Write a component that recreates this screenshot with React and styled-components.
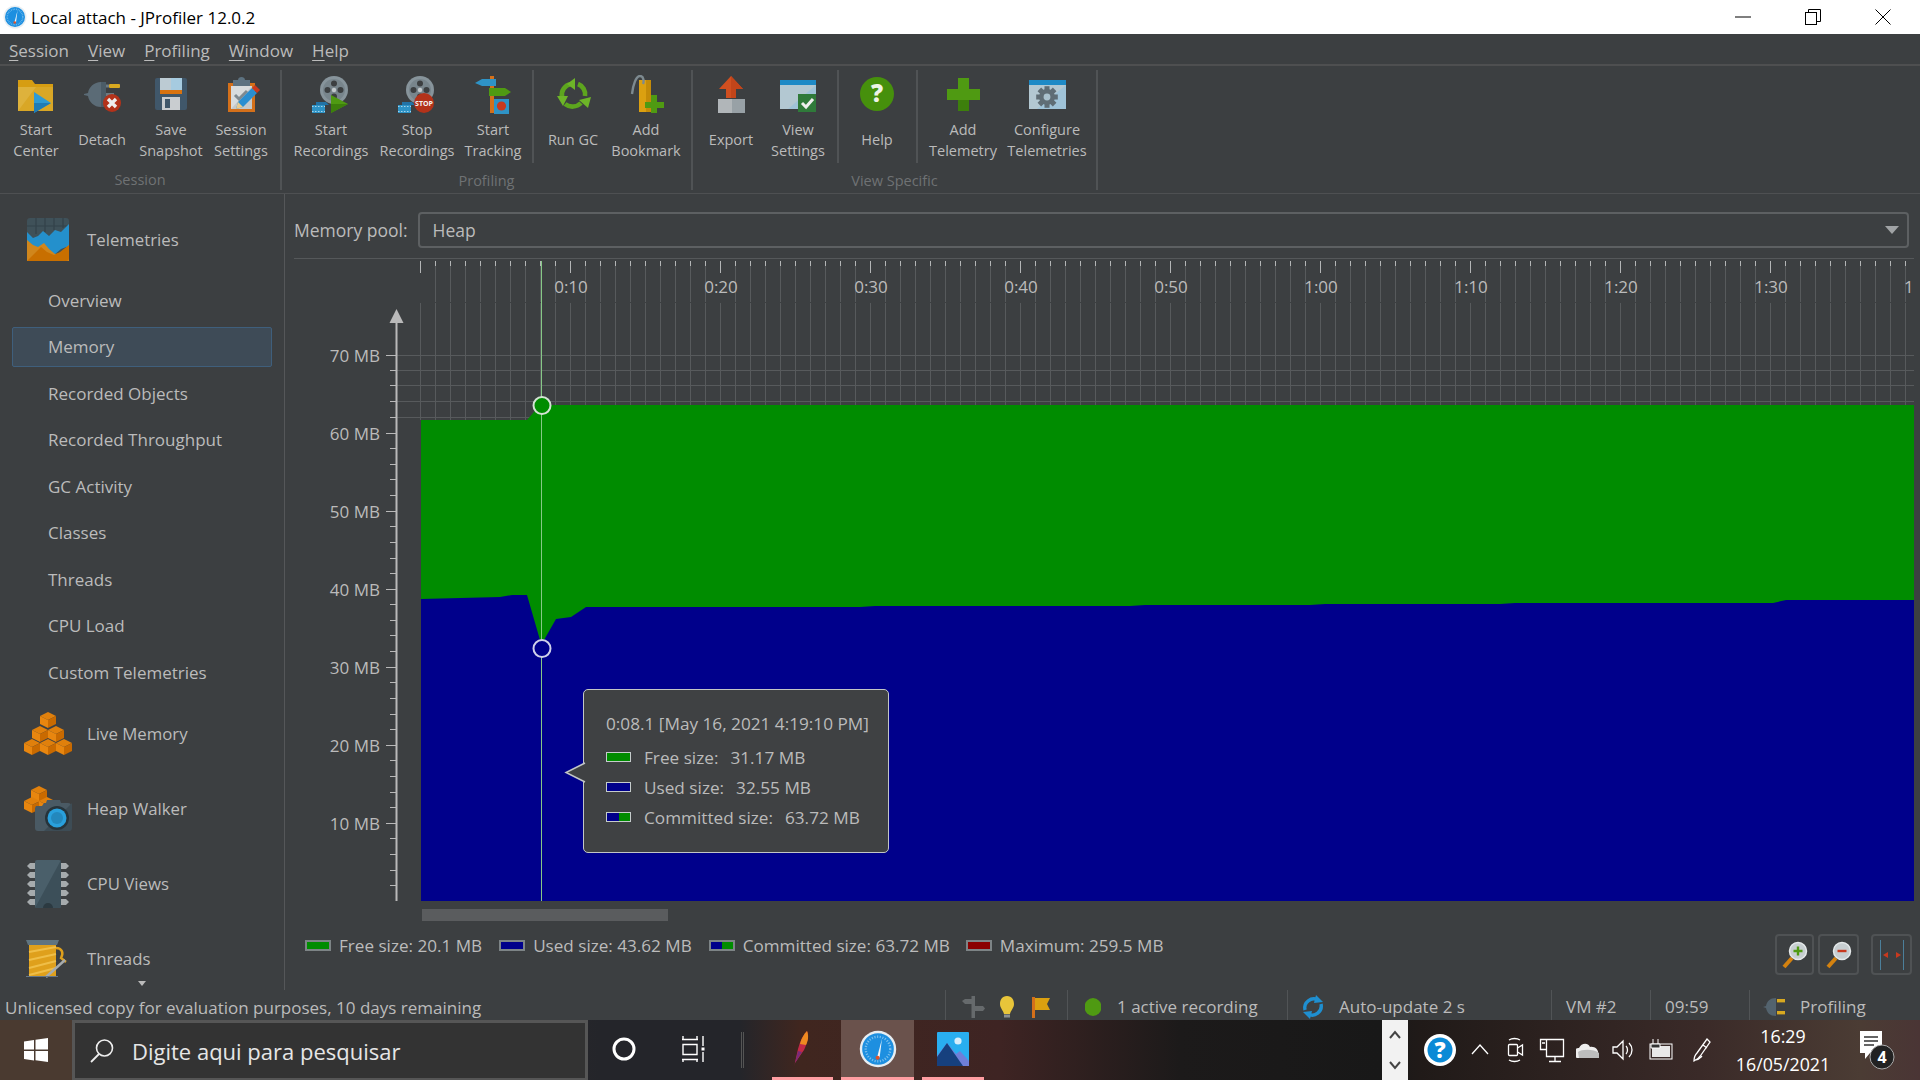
import React from "react";
import styled, { createGlobalStyle } from "styled-components";

const GlobalStyle = createGlobalStyle`
  html, body {
    margin: 0;
    padding: 0;
    background: #3c3f41;
  }
  body {
    font-family: "Open Sans", "Noto Sans", sans-serif;
    overflow: hidden;
  }
`;

const Page = styled.div`
  width: 1920px;
  height: 1080px;
  display: flex;
  flex-direction: column;
  background: #3c3f41;
  color: #bbbbbb;
  overflow: hidden;
`;

/* title bar */
const TitleBar = styled.div`
  height: 34px;
  flex: none;
  display: flex;
  align-items: center;
  background: #fff;
  color: #000;
  padding: 0 2px 0 3px;
  font-size: 17px;
`;

const TitleText = styled.span`
  margin-left: 4px;
  flex: 1;
`;

const WinButton = styled.div`
  width: 70px;
  height: 34px;
  display: flex;
  align-items: center;
  justify-content: center;
`;

/* menu */
const MenuBar = styled.div`
  height: 30px;
  box-sizing: content-box;
  flex: none;
  display: flex;
  align-items: center;
  border-bottom: 2px solid #4e4f50;
  padding-left: 9px;
  gap: 19px;
  font-size: 17px;
`;

const MenuEntry = styled.span`
  padding-top: 2px;
`;

const MenuKey = styled.span`
  text-decoration: underline;
  text-underline-offset: 3px;
`;

/* ribbon */
const Ribbon = styled.div`
  height: 127px;
  flex: none;
  display: flex;
  align-items: flex-start;
  border-bottom: 1px solid #4e5052;
`;

const Group = styled.div`
  width: ${(p) => p.$width}px;
  height: 120px;
  margin-top: 4px;
  box-sizing: border-box;
  border-right: 2px solid #505355;
  padding-left: ${(p) => p.$pad}px;
  display: flex;
  flex-direction: column;
`;

const GroupRow = styled.div`
  display: flex;
  height: 93px;
`;

const GroupTitle = styled.div`
  font-size: 14.5px;
  color: #6f7274;
  text-align: center;
  margin-left: ${(p) => -p.$pad}px;
  line-height: 20px;
  margin-top: 8px;
`;

const RowSep = styled.div`
  width: 2px;
  height: 93px;
  background: #505355;
  margin: 0 ${(p) => p.$right}px 0 ${(p) => p.$left}px;
`;

const Tool = styled.div`
  width: ${(p) => p.$width}px;
  flex: none;
  display: flex;
  flex-direction: column;
  align-items: center;
  padding-top: 5px;
`;

const ToolLabel = styled.div`
  height: 42px;
  margin-top: 4px;
  box-sizing: border-box;
  padding-bottom: ${(p) => (p.$single ? 2 : 0)}px;
  display: flex;
  align-items: center;
  text-align: center;
  font-size: 14.5px;
  line-height: 21px;
  white-space: nowrap;
`;

/* body */
const Body = styled.div`
  flex: 1;
  min-height: 0;
  display: flex;
`;

const Sidebar = styled.div`
  width: 285px;
  flex: none;
  box-sizing: border-box;
  border-right: 1px solid #555759;
  padding-top: 24px;
  position: relative;
  overflow: hidden;
`;

const NavSection = styled.div`
  height: 43px;
  display: flex;
  align-items: center;
  font-size: 16.8px;
  margin-bottom: ${(p) => p.$after}px;
`;

const NavIcon = styled.div`
  width: 87px;
  flex: none;
  display: flex;
  justify-content: center;
  padding-left: 9px;
  box-sizing: border-box;
`;

const NavItem = styled.div`
  width: 260px;
  height: 40px;
  margin: 0 0 6.5px 12px;
  box-sizing: border-box;
  padding-left: 35px;
  display: flex;
  align-items: center;
  font-size: 17px;
  border-radius: 2px;
  border: 1px solid ${(p) => (p.$active ? "#3f5f7c" : "transparent")};
  background: ${(p) => (p.$active ? "#3e4b57" : "transparent")};
`;

const NavItems = styled.div`
  margin-bottom: 20px;
`;

const ScrollHint = styled.div`
  position: absolute;
  left: 138px;
  bottom: 4px;
  width: 0;
  height: 0;
  border-left: 4px solid transparent;
  border-right: 4px solid transparent;
  border-top: 5px solid #bbbbbb;
`;

const Main = styled.div`
  flex: 1;
  min-width: 0;
  display: flex;
  flex-direction: column;
`;

const PoolRow = styled.div`
  height: 65px;
  flex: none;
  box-sizing: border-box;
  margin: 0 6px 0 9px;
  border-bottom: 1px solid #55585a;
  display: flex;
  align-items: center;
  padding: 7px 5px 0 0;
  font-size: 17.5px;
`;

const PoolCombo = styled.div`
  flex: 1;
  height: 36px;
  box-sizing: border-box;
  margin-left: 10px;
  padding: 0 8px 0 13px;
  border: 2px solid #5d6062;
  border-radius: 4px;
  display: flex;
  align-items: center;
  justify-content: space-between;
`;

const ComboArrow = styled.div`
  width: 0;
  height: 0;
  border-left: 7px solid transparent;
  border-right: 7px solid transparent;
  border-top: 8px solid #a0a3a5;
`;

const ChartArea = styled.div`
  position: relative;
  height: 665px;
  flex: none;
  svg {
    display: block;
  }
`;

const Tooltip = styled.div`
  position: absolute;
  left: 298px;
  top: 430px;
  width: 306px;
  height: 164px;
  box-sizing: border-box;
  padding: 21px 0 0 22px;
  background: #3f4143;
  border: 1.5px solid #c2c6c6;
  border-radius: 5px;
  font-size: 17.2px;
`;

const TipPointer = styled.svg`
  position: absolute;
  left: -20px;
  top: 71px;
`;

const TipTitle = styled.div`
  height: 26px;
  line-height: 26px;
  margin-bottom: 5px;
  white-space: nowrap;
`;

const TipRow = styled.div`
  height: 30px;
  display: flex;
  align-items: center;
  white-space: nowrap;
`;

const TipValue = styled.span`
  margin-left: 12px;
`;

const Swatch = styled.span`
  width: ${(p) => (p.$legend ? 26 : 25)}px;
  height: ${(p) => (p.$legend ? 11 : 10)}px;
  flex: none;
  box-sizing: border-box;
  margin-right: ${(p) => (p.$legend ? 8 : 13)}px;
  border: ${(p) => (p.$legend ? "2px solid #7d8486" : "1px solid #c5cccc")};
  background: ${(p) => p.$fill};
`;

const LegendRow = styled.div`
  flex: 1;
  position: relative;
  display: flex;
  align-items: flex-start;
  padding: 7px 0 0 20px;
  font-size: 17.1px;
`;

const LegendItem = styled.div`
  display: flex;
  align-items: center;
  height: 14px;
  margin-top: 7px;
  margin-right: ${(p) => p.$after}px;
  white-space: nowrap;
`;

const ZoomButtons = styled.div`
  margin-left: auto;
  margin-top: 3px;
  display: flex;
  padding-right: 8px;
`;

const ZoomButton = styled.div`
  width: ${(p) => p.$width}px;
  height: 41px;
  box-sizing: border-box;
  margin-left: ${(p) => p.$gap}px;
  border: 2px solid #4f5254;
  border-radius: 4px;
  display: flex;
  align-items: center;
  justify-content: center;
`;

/* status bar */
const StatusBar = styled.div`
  height: 30px;
  flex: none;
  display: flex;
  align-items: center;
  font-size: 17px;
  padding-left: 5px;
`;

const StatusText = styled.div`
  margin-right: auto;
  padding-top: 4px;
  white-space: nowrap;
`;

const StatusCell = styled.div`
  width: ${(p) => p.$width}px;
  height: 30px;
  flex: none;
  box-sizing: border-box;
  border-left: 1px solid #515456;
  padding: 3px 0 0 ${(p) => p.$pad}px;
  display: flex;
  align-items: center;
  gap: ${(p) => p.$gap || 0}px;
  white-space: nowrap;
`;

/* windows taskbar */
const Taskbar = styled.div`
  height: 60px;
  flex: none;
  display: flex;
  align-items: stretch;
  color: #fff;
  background: linear-gradient(
    90deg,
    #4a3a30 0,
    #4a3a30 72px,
    #24252a 600px,
    #24252a 740px,
    #40261f 800px,
    #3e2423 1000px,
    #1c1a1a 1180px,
    #181818 1380px,
    #201a18 1420px,
    #3a2a28 1700px,
    #4b3c34 1860px,
    #4a3535 1920px
  );
`;

const StartButton = styled.div`
  width: 72px;
  flex: none;
  display: flex;
  align-items: center;
  justify-content: center;
`;

const SearchBox = styled.div`
  width: 516px;
  flex: none;
  box-sizing: border-box;
  background: #333333;
  border: 3px solid #565656;
  border-bottom-width: 2px;
  display: flex;
  align-items: center;
  padding-left: 14px;
  gap: 17px;
  font-size: 22px;
  color: #e6e6e6;
`;

const TaskCell = styled.div`
  width: ${(p) => p.$width}px;
  flex: none;
  margin-left: ${(p) => p.$left || 0}px;
  box-sizing: border-box;
  display: flex;
  align-items: center;
  justify-content: center;
  background: ${(p) => (p.$active ? "#6a524c" : "transparent")};
  border-bottom: 3px solid ${(p) => (p.$open ? "#ff9ea2" : "transparent")};
`;

const TaskDivider = styled.div`
  width: 3px;
  height: 36px;
  margin: 12px 28px 0 11px;
  border-left: 1px solid #555;
  border-right: 1px solid #555;
  box-sizing: border-box;
`;

const TrayStrip = styled.div`
  width: 26px;
  margin-left: auto;
  flex: none;
  background: #f2f2f2;
  display: flex;
  flex-direction: column;
  align-items: center;
  justify-content: space-between;
  padding: 10px 0;
  box-sizing: border-box;
  margin-right: 12px;
`;

const TrayCell = styled.div`
  width: ${(p) => p.$width}px;
  flex: none;
  display: flex;
  align-items: center;
  justify-content: center;
`;

const Clock = styled.div`
  width: 114px;
  flex: none;
  display: flex;
  flex-direction: column;
  align-items: center;
  justify-content: space-between;
  padding: 5px 0 5px;
  box-sizing: border-box;
  font-size: 17.8px;
  line-height: 22px;
`;

const TrayEnd = styled.div`
  width: 80px;
  flex: none;
  display: flex;
  padding-left: 18px;
  box-sizing: border-box;
  align-items: center;
`;

const GREEN = "#008c00";
const BLUE = "#00008b";

/* ---------- toolbar icons ---------- */
const Ic = ({ children, size = 40, w, h }) => (
  <svg width={w || size} height={h || size} viewBox={`0 0 ${w || size} ${h || size}`}>
    {children}
  </svg>
);

const StartCenterIcon = () => (
  <Ic>
    <path d="M2 5h14l3 4h18v27H2z" fill="#d69d12" />
    <path d="M2 12h35v24H2z" fill="#deb23c" />
    <path d="M2 36l18-24h17v24z" fill="#d9a726" />
    <path d="M18 17l17 11-17 10z" fill="#2e9bd4" />
    <path d="M18 28h17l-17 10z" fill="#1f7cb6" />
  </Ic>
);

const DetachIcon = () => (
  <Ic>
    <path d="M2 19l4-1c1-6 6-11 13-11h5v25h-5c-7 0-12-5-13-11l-4-1z" fill="#5b6b76" />
    <path d="M24 7v25h-5V7z" fill="#4b5c67" />
    <rect x="27" y="9" width="11" height="4" rx="1" fill="#d8a920" />
    <rect x="24" y="9.5" width="3" height="3" fill="#6d7a82" />
    <rect x="24" y="18" width="8" height="3" fill="#6d7a82" />
    <circle cx="30" cy="28" r="9" fill="#b3321a" />
    <path d="M26 24l8 8M34 24l-8 8" stroke="#eee" strokeWidth="3.4" />
  </Ic>
);

const SaveIcon = () => (
  <Ic>
    <rect x="4" y="3" width="32" height="32" rx="2" fill="#40576a" />
    <rect x="9" y="3" width="11" height="12" fill="#bccbd3" />
    <rect x="20" y="3" width="11" height="12" fill="#a6cbe0" />
    <rect x="9" y="15" width="22" height="4" fill="#d9730f" />
    <rect x="11" y="22" width="18" height="13" fill="#c9cdd0" />
    <rect x="14" y="24" width="5" height="9" fill="#40576a" />
  </Ic>
);

const SettingsIcon = () => (
  <Ic>
    <rect x="7" y="8" width="27" height="29" fill="#d4701a" />
    <rect x="10" y="11" width="21" height="23" fill="#d8dcdd" />
    <path d="M10 34l21-23v23z" fill="#c4c8ca" />
    <path d="M12 5h17v6H12z" fill="#5d7280" />
    <path d="M17 5c0-4 7-4 7 0z" fill="#5d7280" />
    <path d="M14 20l4 4 8-8" fill="none" stroke="#7f8a90" strokeWidth="3" />
    <path d="M15 34l2-7 14-14 5 5-14 14z" fill="#2a8ed0" />
    <path d="M31 13l3-3 5 5-3 3z" fill="#c8391e" />
    <path d="M15 34l2-7 5 5z" fill="#e8cb90" />
  </Ic>
);

const Reel = () => (
  <g>
    <circle cx="23" cy="15" r="14" fill="#87949b" />
    <circle cx="23" cy="15" r="11" fill="#78858c" />
    <circle cx="23" cy="8.5" r="3" fill="#3c3f41" />
    <circle cx="23" cy="21.5" r="3" fill="#3c3f41" />
    <circle cx="16.5" cy="15" r="3" fill="#3c3f41" />
    <circle cx="29.5" cy="15" r="3" fill="#3c3f41" />
    <circle cx="23" cy="15" r="2.2" fill="#c2c8cb" />
    <path d="M5 27h10l3 3H5z" fill="#2273a6" />
    <rect x="1" y="30" width="13" height="8" fill="#2e93c6" />
    <path d="M1 31.5h13M1 36.5h13" stroke="#a5d4ec" strokeDasharray="1.5 1.5" />
  </g>
);

const StartRecIcon = () => (
  <Ic>
    <Reel />
    <path d="M20 20l17 9-17 9z" fill="#4f9a12" />
    <path d="M20 29h17l-17 9z" fill="#3d7f0c" />
  </Ic>
);

const StopRecIcon = () => (
  <Ic>
    <Reel />
    <circle cx="27" cy="28" r="10" fill="#b3321a" />
    <text x="27" y="30.5" textAnchor="middle" fontSize="7" fontWeight="700" fill="#f3f3f3">STOP</text>
  </Ic>
);

const TrackingIcon = () => (
  <Ic>
    <rect x="17" y="1" width="4" height="37" fill="#d4701a" />
    <path d="M2 8l7-4h14v7H9z" fill="#2e93c6" />
    <path d="M16 13h16l6 4-6 4H16z" fill="#4f9a12" />
    <rect x="21" y="24" width="15" height="15" fill="#2e93c6" />
    <circle cx="28.5" cy="31" r="4.6" fill="#c8391e" />
  </Ic>
);

const RunGcIcon = () => (
  <Ic>
    <g fill="none" stroke="#5da51e" strokeWidth="4.6">
      <path d="M9 22a11 11 0 0 1 9-13" />
      <path d="M25 9a11 11 0 0 1 7 12" />
      <path d="M28 28a12 12 0 0 1-16 1" />
    </g>
    <path d="M14 9l8-6v12z" fill="#6db528" />
    <path d="M26 25l12-3-3 11z" fill="#6db528" />
    <path d="M4 21h11l-5 10z" fill="#6db528" />
  </Ic>
);

const BookmarkIcon = () => (
  <Ic>
    <path d="M13 5h12v32H13z" fill="#dba010" />
    <path d="M20 5h5v32h-5z" fill="#c48b08" />
    <path d="M6 19C7 10 10 1 14 1c4 0 4 6 3 8" fill="none" stroke="#7d8a90" strokeWidth="2.4" />
    <path d="M25 20h6v7h7v6h-7v5h-6v-5h-6v-6h6z" fill="#4f9a12" />
  </Ic>
);

const ExportIcon = () => (
  <Ic>
    <path d="M20 1l12 13h-7v9H15v-9H8z" fill="#d04f20" />
    <path d="M20 1l12 13h-7v9h-5z" fill="#c2451a" />
    <rect x="7" y="24" width="14" height="14" fill="#b1b6b9" />
    <rect x="21" y="24" width="13" height="14" fill="#98a1a6" />
  </Ic>
);

const ViewSettingsIcon = () => (
  <Ic>
    <rect x="2" y="5" width="36" height="29" fill="#b3c8d2" />
    <path d="M38 10v24H10z" fill="#9fc3d8" />
    <rect x="2" y="5" width="36" height="5" fill="#1e8ac6" />
    <rect x="20" y="19" width="18" height="18" fill="#2f7a3a" />
    <path d="M24 28l4 4 7-8" fill="none" stroke="#eee" strokeWidth="3" />
  </Ic>
);

const HelpIcon = () => (
  <Ic>
    <ellipse cx="20" cy="19" rx="17" ry="17" fill="#46900c" />
    <text x="20" y="27" textAnchor="middle" fontSize="24" fontWeight="800" fill="#eef3e6">?</text>
  </Ic>
);

const AddIcon = () => (
  <Ic>
    <path d="M15 3h11v11h11v11H26v11H15V25H4V14h11z" fill="#4f9a12" />
    <path d="M4 25h11v11h11V25z" fill="#3d7f0c" />
  </Ic>
);

const GearShape = ({ cx, cy, r, fill, hole }) => {
  const teeth = [0, 45, 90, 135];
  return (
    <g>
      {teeth.map((a) => (
        <rect key={a} x={cx - r * 0.28} y={cy - r * 1.2} width={r * 0.56} height={r * 2.4} fill={fill} transform={`rotate(${a} ${cx} ${cy})`} />
      ))}
      <circle cx={cx} cy={cy} r={r * 0.88} fill={fill} />
      <circle cx={cx} cy={cy} r={r * 0.38} fill={hole} />
    </g>
  );
};

const ConfigureIcon = () => (
  <Ic>
    <rect x="2" y="5" width="37" height="29" fill="#b3c8d2" />
    <path d="M39 10v24H10z" fill="#9fc3d8" />
    <rect x="2" y="5" width="37" height="5" fill="#1e8ac6" />
    <GearShape cx={20} cy={22} r={9} fill="#5f6d75" hole="#a9c1cd" />
  </Ic>
);

/* ---------- sidebar icons ---------- */
const TelemetriesIcon = () => (
  <Ic w={42} h={43}>
    <rect width="42" height="43" rx="3" fill="#3f5159" />
    <path d="M9 0v16M18 0v14M27 0v12M36 0v10M0 8h42" stroke="#33424a" strokeWidth="1.2" />
    <path d="M0 14l6 6 5-2 5-5 6 5 6-6 6 2 8-8v22l-8 3-7 6-5-2-6 5-5-5-6 3-5-5z" fill="#2490cc" />
    <path d="M0 22l6 5 5 2 6-4 5 6 6 5 6-1 8-8v16a3 3 0 0 1-3 3H3a3 3 0 0 1-3-3z" fill="#d0861c" />
    <path d="M0 43l14-14 6 5 7 3 6-3 9-7v13a3 3 0 0 1-3 3z" fill="#c86f00" />
  </Ic>
);

const Cube = ({ x, y }) => (
  <g>
    <path d={`M${x} ${y}l8 4-8 4-8-4z`} fill="#e0800c" />
    <path d={`M${x - 8} ${y + 4}l8 4v8l-8-4z`} fill="#e8860f" />
    <path d={`M${x + 8} ${y + 4}l-8 4v8l8-4z`} fill="#c96a00" />
  </g>
);

const LiveMemoryIcon = () => (
  <Ic w={48} h={44}>
    <Cube x={24} y={0} />
    <Cube x={16} y={14} />
    <Cube x={32} y={14} />
    <Cube x={8} y={27} />
    <Cube x={24} y={27} />
    <Cube x={40} y={27} />
  </Ic>
);

const HeapWalkerIcon = () => (
  <Ic w={48} h={46}>
    <Cube x={15} y={0} />
    <Cube x={8} y={11} />
    <Cube x={23} y={11} />
    <path d="M12 20h6l2-3h2l1-3h13l1 3h7a3 3 0 0 1 3 3v22a3 3 0 0 1-3 3H14a3 3 0 0 1-3-3V22z" fill="#4a5a64" />
    <path d="M48 20v22a3 3 0 0 1-3 3H20l28-28z" fill="#3d4c55" />
    <circle cx="33" cy="32" r="12" fill="#26343b" />
    <circle cx="33" cy="32" r="9.5" fill="#29a0dc" />
    <circle cx="33" cy="32" r="6" fill="#2388bd" />
  </Ic>
);

const CpuIcon = () => (
  <Ic w={42} h={48}>
    {[3, 12, 21, 30, 39].map((y) => (
      <g key={y}>
        <path d={`M8 ${y}H3l-3 3 3 3h5z`} fill="#a6abad" />
        <path d={`M34 ${y}h5l3 3-3 3h-5z`} fill="#a6abad" />
      </g>
    ))}
    <rect x="8" y="0" width="26" height="48" rx="2" fill="#4a5f6a" />
    <path d="M34 0v46a2 2 0 0 1-2 2H8z" fill="#3c4f59" />
    <path d="M16 48a5 5 0 0 1 10 0z" fill="#2c3a41" />
  </Ic>
);

const ThreadsIcon = () => (
  <Ic w={44} h={38}>
    <path d="M0 0h33l-2 5H2z" fill="#5f7480" />
    <rect x="3" y="5" width="27" height="31" fill="#dfa01c" />
    <path d="M3 12l27-5M3 20l27-6M3 28l27-7M3 35l27-7" stroke="#efbe48" strokeWidth="2" />
    <path d="M30 8c6 0 8 5 5 10l5 4" fill="none" stroke="#dfa01c" strokeWidth="2.4" />
    <path d="M20 37l19-17" stroke="#a6abad" strokeWidth="2.4" />
    <rect y="36" width="32" height="1" fill="#667788" />
  </Ic>
);

/* ---------- status and taskbar icons ---------- */
const SignIcon = () => (
  <Ic size={24}>
    <rect x="10.5" y="1" width="3.5" height="22" fill="#666a6c" />
    <path d="M1 6l3-2h10v5H4z" fill="#666a6c" />
    <path d="M12 11h10l2 2.5-2 2.5H12z" fill="#666a6c" />
  </Ic>
);

const BulbIcon = () => (
  <Ic size={24}>
    <path d="M12 1c5 0 7 4 7 8 0 4-3 6-4 10H9c-1-4-4-6-4-10 0-4 2-8 7-8z" fill="#e8c53a" />
    <rect x="9" y="19.5" width="6" height="3" fill="#8a8f90" />
  </Ic>
);

const FlagIcon = () => (
  <Ic size={24}>
    <rect x="3" y="2" width="3" height="21" fill="#d4701a" />
    <path d="M6 3h15l-3 6 3 6H6z" fill="#dba010" />
  </Ic>
);

const RefreshIcon = () => (
  <Ic size={24}>
    <g fill="none" stroke="#1f8fd0" strokeWidth="3.4">
      <path d="M4 15a9 9 0 0 1 13-10" />
      <path d="M20 9a9 9 0 0 1-13 10" />
    </g>
    <path d="M15 0l7 7-9 1z" fill="#1f8fd0" />
    <path d="M9 24l-7-7 9-1z" fill="#1f8fd0" />
  </Ic>
);

const PlugSmall = () => (
  <Ic size={26}>
    <path d="M1 13l3-1c1-5 4-8 10-8v18c-6 0-9-3-10-8z" fill="#53636e" />
    <rect x="15" y="5" width="8" height="3.4" fill="#d8a920" />
    <rect x="15" y="17" width="8" height="3.4" fill="#d8a920" />
  </Ic>
);

const JProfilerLogo = ({ size }) => (
  <svg width={size} height={size} viewBox="0 0 48 48">
    <circle cx="24" cy="24" r="23" fill="#e8eef2" />
    <circle cx="24" cy="24" r="20" fill="#1d8fe0" />
    <circle cx="24" cy="24" r="15.5" fill="none" stroke="#7cc0ee" strokeWidth="3" strokeDasharray="1.4 2" />
    <path d="M29 11l-3 24-3-1z" fill="#f2f6f9" />
    <circle cx="23.5" cy="35" r="2.6" fill="#e0522a" />
  </svg>
);

const WindowsLogo = () => (
  <Ic size={24}>
    <path d="M0 3.4l10-1.4v9.5H0zM11.5 1.8L24 0v11.5H11.5zM0 13h10v9.5L0 21zM11.5 13H24v11l-12.5-1.8z" fill="#fff" />
  </Ic>
);

const SearchGlyph = () => (
  <Ic size={26}>
    <circle cx="15.5" cy="10" r="8" fill="none" stroke="#eee" strokeWidth="1.6" />
    <path d="M10 16L2 24" stroke="#eee" strokeWidth="1.8" />
  </Ic>
);

const TaskViewIcon = () => (
  <Ic size={26}>
    <g fill="none" stroke="#fff" strokeWidth="1.4">
      <path d="M0 3.5h16M1 8.5h14v10H1zM0 23.5h16M1 3.5V0M15 3.5V0M1 23.5V26M15 23.5V26" />
      <path d="M21 0v10M21 16v10" />
    </g>
    <rect x="19.5" y="11.5" width="3" height="3" fill="#fff" />
  </Ic>
);

const FeatherIcon = () => (
  <Ic size={40}>
    <g transform="translate(-5 0)">
      <path d="M29 2c2 5 0 13-3 19l-9 13-1 4 4-18C22 12 25 6 29 2z" fill="#c22a48" />
      <path d="M29 2c2 5 1 10-1 14l-6-1c1-5 4-10 7-13z" fill="#ee8a20" />
      <path d="M17 34l3-12 4 1z" fill="#7a2a7a" />
    </g>
  </Ic>
);

const PhotosIcon = () => (
  <Ic size={34}>
    <rect x="1" y="0" width="32" height="34" rx="1" fill="#29aef0" />
    <circle cx="22" cy="9" r="3.6" fill="#d8eefb" />
    <path d="M1 34V24l10-13 9 11 4-3 9 10v5z" fill="#6f7fd8" />
    <path d="M1 34V25l10-14 16 23z" fill="#16407e" />
  </Ic>
);

const TrayHelp = () => (
  <Ic size={34}>
    <circle cx="17" cy="17" r="16" fill="#fff" />
    <circle cx="17" cy="17" r="12.5" fill="#0a8ad6" />
    <text x="17" y="25" textAnchor="middle" fontSize="22" fontWeight="800" fill="#fff">?</text>
  </Ic>
);

const TrayStroke = ({ children, w = 24, h = 24 }) => (
  <svg width={w} height={h} viewBox={`0 0 ${w} ${h}`} fill="none" stroke="#fff" strokeWidth="1.3">
    {children}
  </svg>
);

const ZoomGlass = ({ sign }) => (
  <Ic size={30}>
    <path d="M12 18L4 27" stroke="#d4820f" strokeWidth="4" />
    <circle cx="18" cy="11" r="8.5" fill="#c7ced1" stroke="#e5e9ea" strokeWidth="1.5" />
    {sign === "+" ? (
      <path d="M18 6.5v9M13.5 11h9" stroke="#4f9a12" strokeWidth="2.4" />
    ) : (
      <path d="M13.5 11h9" stroke="#c8391e" strokeWidth="2.4" />
    )}
  </Ic>
);

/* ---------- chart ---------- */
const xTicks = Array.from({ length: 100 }, (_, i) => 420 + i * 15);
const yMajors = [355, 433, 511, 589, 667, 745, 823];
const yLabels = ["70 MB", "60 MB", "50 MB", "40 MB", "30 MB", "20 MB", "10 MB"];
const yMinors = [355, 370, 385, 401, 417, 433, 448, 464, 479, 495, 511, 526, 542, 558, 573, 589, 604, 620, 635, 651, 667, 682, 698, 714, 729, 745, 760, 776, 792, 807, 823, 838, 854, 870, 885];
const timeLabels = ["0:10", "0:20", "0:30", "0:40", "0:50", "1:00", "1:10", "1:20", "1:30"];

const greenPts = "421,901 421,420 527,420 540,405 1914,405 1914,901";
const bluePts =
  "421,901 421,599 500,597 512,595 527,595 540,640 544,640 556,619 571,617 586,607 860,607 875,606 1130,606 1145,605 1310,605 1325,604 1500,604 1515,603 1773,603 1786,600 1914,600 1914,901";

const MemoryChart = () => (
  <svg width="1635" height="665" viewBox="285 259 1635 665" fontSize="17" fill="#bbbbbb">
    {xTicks.map((x) => {
      const major = (x - 420) % 150 === 0;
      return (
        <g key={x}>
          {!major && <line x1={x + 0.5} x2={x + 0.5} y1="266" y2="302" stroke="#575a5c" />}
          <line x1={x + 0.5} x2={x + 0.5} y1="261" y2={major ? 273 : 266} stroke="#b4b6b7" />
          <line x1={x + 0.5} x2={x + 0.5} y1="303" y2="420" stroke="#575a5c" />
        </g>
      );
    })}
    {yMinors.slice(0, 5).map((y) => (
      <line key={y} x1="396" x2="1914" y1={y + 0.5} y2={y + 0.5} stroke="#575a5c" />
    ))}
    {timeLabels.map((t, i) => (
      <text key={t} x={571 + i * 150} y="293" textAnchor="middle">{t}</text>
    ))}
    <text x="1904" y="293">1</text>

    <polygon points={greenPts} fill={GREEN} />
    <polygon points={bluePts} fill={BLUE} />

    <line x1="396.5" x2="396.5" y1="322" y2="901" stroke="#b9b9b9" strokeWidth="2" />
    <path d="M396.5 309l7 14h-14z" fill="#b9b9b9" />
    {yMinors.map((y) => (
      <line key={y} x1={yMajors.includes(y) ? 386 : 390} x2="396" y1={y + 0.5} y2={y + 0.5} stroke="#b9b9b9" />
    ))}
    {yMajors.map((y, i) => (
      <text key={y} x="380" y={y + 7} textAnchor="end">{yLabels[i]}</text>
    ))}

    <line x1="541.5" x2="541.5" y1="261" y2="901" stroke="#86c886" />
    <circle cx="542" cy="405.5" r="8.5" fill={GREEN} stroke="#d3e3d3" strokeWidth="2" />
    <circle cx="542" cy="648.5" r="8.5" fill={BLUE} stroke="#cfd0ea" strokeWidth="2" />

    <rect x="422" y="909" width="246" height="12" fill="#5a5c5e" />
  </svg>
);

const tools = {
  session: [
    { label: ["Start", "Center"], width: 68, Icon: StartCenterIcon },
    { label: ["Detach"], width: 64, Icon: DetachIcon },
    { label: ["Save", "Snapshot"], width: 74, Icon: SaveIcon },
    { label: ["Session", "Settings"], width: 66, Icon: SettingsIcon },
  ],
  recording: [
    { label: ["Start", "Recordings"], width: 84, Icon: StartRecIcon },
    { label: ["Stop", "Recordings"], width: 88, Icon: StopRecIcon },
    { label: ["Start", "Tracking"], width: 64, Icon: TrackingIcon },
  ],
  gc: [
    { label: ["Run GC"], width: 64, Icon: RunGcIcon },
    { label: ["Add", "Bookmark"], width: 82, Icon: BookmarkIcon },
  ],
  view: [
    { label: ["Export"], width: 60, Icon: ExportIcon },
    { label: ["View", "Settings"], width: 74, Icon: ViewSettingsIcon },
  ],
  help: [{ label: ["Help"], width: 70, Icon: HelpIcon }],
  add: [
    { label: ["Add", "Telemetry"], width: 84, Icon: AddIcon },
    { label: ["Configure", "Telemetries"], width: 84, Icon: ConfigureIcon },
  ],
};

const ToolList = ({ items }) =>
  items.map(({ label, width, Icon }) => (
    <Tool key={label.join(" ")} $width={width}>
      <Icon />
      <ToolLabel $single={!label[1]}>
        <span>
          {label[0]}
          {label[1] && <br />}
          {label[1]}
        </span>
      </ToolLabel>
    </Tool>
  ));

const telemetryItems = ["Overview", "Memory", "Recorded Objects", "Recorded Throughput", "GC Activity", "Classes", "Threads", "CPU Load", "Custom Telemetries"];

const menus = [
  ["S", "ession"],
  ["V", "iew"],
  ["P", "rofiling"],
  ["W", "indow"],
  ["H", "elp"],
];

export default function App() {
  return (
    <Page>
      <GlobalStyle />
      <TitleBar>
        <JProfilerLogo size={24} />
        <TitleText>Local attach - JProfiler 12.0.2</TitleText>
        <WinButton>
          <svg width="16" height="2"><rect width="16" height="1" y="0.5" fill="#000" /></svg>
        </WinButton>
        <WinButton>
          <svg width="16" height="16" fill="none" stroke="#000">
            <rect x="0.5" y="3.5" width="11" height="12" />
            <path d="M3.5 3.5v-3h12v12h-4" />
          </svg>
        </WinButton>
        <WinButton>
          <svg width="16" height="16" stroke="#000"><path d="M0.5 0.5l15 15M15.5 0.5l-15 15" /></svg>
        </WinButton>
      </TitleBar>

      <MenuBar>
        {menus.map(([key, rest]) => (
          <MenuEntry key={key}><MenuKey>{key}</MenuKey>{rest}</MenuEntry>
        ))}
      </MenuBar>

      <Ribbon>
        <Group $width={282} $pad={2}>
          <GroupRow><ToolList items={tools.session} /></GroupRow>
          <GroupTitle $pad={2}>Session</GroupTitle>
        </Group>
        <Group $width={411} $pad={7}>
          <GroupRow>
            <ToolList items={tools.recording} />
            <RowSep $left={7} $right={7} />
            <ToolList items={tools.gc} />
          </GroupRow>
          <GroupTitle $pad={7}>Profiling</GroupTitle>
        </Group>
        <Group $width={405} $pad={8}>
          <GroupRow>
            <ToolList items={tools.view} />
            <RowSep $left={2} $right={3} />
            <ToolList items={tools.help} />
            <RowSep $left={4} $right={3} />
            <ToolList items={tools.add} />
          </GroupRow>
          <GroupTitle $pad={8}>View Specific</GroupTitle>
        </Group>
      </Ribbon>

      <Body>
        <Sidebar>
          <NavSection $after={19}>
            <NavIcon><TelemetriesIcon /></NavIcon>
            Telemetries
          </NavSection>
          <NavItems>
            {telemetryItems.map((item) => (
              <NavItem key={item} $active={item === "Memory"}>{item}</NavItem>
            ))}
          </NavItems>
          <NavSection $after={32}>
            <NavIcon><LiveMemoryIcon /></NavIcon>
            Live Memory
          </NavSection>
          <NavSection $after={32}>
            <NavIcon><HeapWalkerIcon /></NavIcon>
            Heap Walker
          </NavSection>
          <NavSection $after={32}>
            <NavIcon><CpuIcon /></NavIcon>
            CPU Views
          </NavSection>
          <NavSection $after={0}>
            <NavIcon><ThreadsIcon /></NavIcon>
            Threads
          </NavSection>
          <ScrollHint />
        </Sidebar>

        <Main>
          <PoolRow>
            Memory pool:
            <PoolCombo>
              Heap
              <ComboArrow />
            </PoolCombo>
          </PoolRow>
          <ChartArea>
            <MemoryChart />
            <Tooltip>
              <TipPointer width="22" height="24" viewBox="0 0 22 24">
                <path d="M21 2L2 11.5 21 21" fill="#3f4143" stroke="#c2c6c6" strokeWidth="1.5" />
              </TipPointer>
              <TipTitle>0:08.1 [May 16, 2021 4:19:10 PM]</TipTitle>
              <TipRow><Swatch $fill={GREEN} />Free size:<TipValue>31.17 MB</TipValue></TipRow>
              <TipRow><Swatch $fill={BLUE} />Used size:<TipValue>32.55 MB</TipValue></TipRow>
              <TipRow>
                <Swatch $fill={`linear-gradient(90deg, ${BLUE} 50%, ${GREEN} 50%)`} />
                Committed size:<TipValue>63.72 MB</TipValue>
              </TipRow>
            </Tooltip>
          </ChartArea>
          <LegendRow>
            <LegendItem $after={17}><Swatch $legend $fill={GREEN} />Free size: 20.1 MB</LegendItem>
            <LegendItem $after={17}><Swatch $legend $fill={BLUE} />Used size: 43.62 MB</LegendItem>
            <LegendItem $after={16}><Swatch $legend $fill={`linear-gradient(90deg, ${BLUE} 50%, ${GREEN} 50%)`} />Committed size: 63.72 MB</LegendItem>
            <LegendItem $after={0}><Swatch $legend $fill="#8b0000" />Maximum: 259.5 MB</LegendItem>
            <ZoomButtons>
              <ZoomButton $width={39} $gap={0}><ZoomGlass sign="+" /></ZoomButton>
              <ZoomButton $width={41} $gap={4}><ZoomGlass sign="-" /></ZoomButton>
              <ZoomButton $width={41} $gap={12}>
                <svg width="30" height="34">
                  <path d="M3.5 2v30M26.5 2v30" stroke="#4c7f9a" />
                  <path d="M6 17l5-3v6zM24 17l-5-3v6z" fill="#c8391e" />
                </svg>
              </ZoomButton>
            </ZoomButtons>
          </LegendRow>
        </Main>
      </Body>

      <StatusBar>
        <StatusText>Unlicensed copy for evaluation purposes, 10 days remaining</StatusText>
        <StatusCell $width={122} $pad={15} $gap={10}>
          <SignIcon /><BulbIcon /><FlagIcon />
        </StatusCell>
        <StatusCell $width={220} $pad={17} $gap={16}>
          <svg width="16" height="20"><ellipse cx="8" cy="10" rx="8.5" ry="9" fill="#4f9a12" /></svg>
          1 active recording
        </StatusCell>
        <StatusCell $width={264} $pad={13} $gap={14}>
          <RefreshIcon />
          Auto-update 2 s
        </StatusCell>
        <StatusCell $width={99} $pad={14}>VM #2</StatusCell>
        <StatusCell $width={99} $pad={14}>09:59</StatusCell>
        <StatusCell $width={171} $pad={12} $gap={12}>
          <PlugSmall />
          Profiling
        </StatusCell>
      </StatusBar>

      <Taskbar>
        <StartButton><WindowsLogo /></StartButton>
        <SearchBox>
          <SearchGlyph />
          Digite aqui para pesquisar
        </SearchBox>
        <TaskCell $width={72}>
          <svg width="26" height="26" fill="none" stroke="#fff" strokeWidth="3"><circle cx="13" cy="13" r="10" /></svg>
        </TaskCell>
        <TaskCell $width={70}><TaskViewIcon /></TaskCell>
        <TaskDivider />
        <TaskCell $width={61} $open><FeatherIcon /></TaskCell>
        <TaskCell $width={73} $left={8} $active $open><JProfilerLogo size={38} /></TaskCell>
        <TaskCell $width={62} $left={8} $open><PhotosIcon /></TaskCell>

        <TrayStrip>
          <svg width="14" height="9" fill="none" stroke="#444" strokeWidth="2"><path d="M2 8l5-6 5 6" /></svg>
          <svg width="14" height="9" fill="none" stroke="#444" strokeWidth="2"><path d="M2 1l5 6 5-6" /></svg>
        </TrayStrip>
        <TrayCell $width={40}><TrayHelp /></TrayCell>
        <TrayCell $width={40}>
          <TrayStroke><path d="M4 16l8-9 8 9" /></TrayStroke>
        </TrayCell>
        <TrayCell $width={32}>
          <TrayStroke w={20} h={28}>
            <rect x="2.5" y="8.5" width="9" height="11" rx="1" />
            <path d="M11.5 12l5-3v10l-5-3M3 4c3-2 8-2 11 0M3 24c3 2 8 2 11 0" />
          </TrayStroke>
        </TrayCell>
        <TrayCell $width={40}>
          <TrayStroke w={26} h={28}>
            <path d="M7.5 3.5h17v17h-17zM16 20.5v5M10 25.5h12M1.5 3.5h6v10h-6zM3 7h3" />
          </TrayStroke>
        </TrayCell>
        <TrayCell $width={32}>
          <svg width="24" height="18">
            <path d="M2 17a5 5 0 0 1 1-10c2-5 9-6 11-1 5-1 9 3 8 7l1 4z" fill="#eee" />
            <path d="M2 11c4-3 16-3 21 1v5H3z" fill="#bdbdbd" />
          </svg>
        </TrayCell>
        <TrayCell $width={38}>
          <TrayStroke w={24} h={24}>
            <path d="M2 9h4l6-6v18l-6-6H2zM15 8c2 2 2 6 0 8M18 5c4 4 4 10 0 14" />
          </TrayStroke>
        </TrayCell>
        <TrayCell $width={36}>
          <svg width="26" height="24">
            <rect x="3" y="6" width="22" height="15" fill="none" stroke="#fff" />
            <rect x="5" y="8" width="18" height="11" fill="#e8e8e8" />
            <path d="M6 1v5M11 1v5M4 6h9v4H4z" stroke="#fff" fill="#333" />
          </svg>
        </TrayCell>
        <TrayCell $width={48}>
          <TrayStroke w={22} h={26}>
            <path d="M16 2l3 3-9 13c-2 3-5 5-7 6 0-3 1-6 3-8zM12 8l4 3M4 23c4 0 5-2 7-4" />
          </TrayStroke>
        </TrayCell>
        <Clock>
          <span>16:29</span>
          <span>16/05/2021</span>
        </Clock>
        <TrayEnd>
          <svg width="40" height="42" viewBox="0 0 40 42">
            <path d="M2 2h22v22H12l-5 6v-6H2z" fill="#fff" />
            <path d="M6 8h14M6 12h14M6 16h10" stroke="#333" strokeWidth="1.4" />
            <circle cx="24" cy="28" r="12" fill="#222" stroke="#aaa" />
            <text x="24" y="34" textAnchor="middle" fontSize="16" fontWeight="700" fill="#fff">4</text>
          </svg>
        </TrayEnd>
      </Taskbar>
    </Page>
  );
}
